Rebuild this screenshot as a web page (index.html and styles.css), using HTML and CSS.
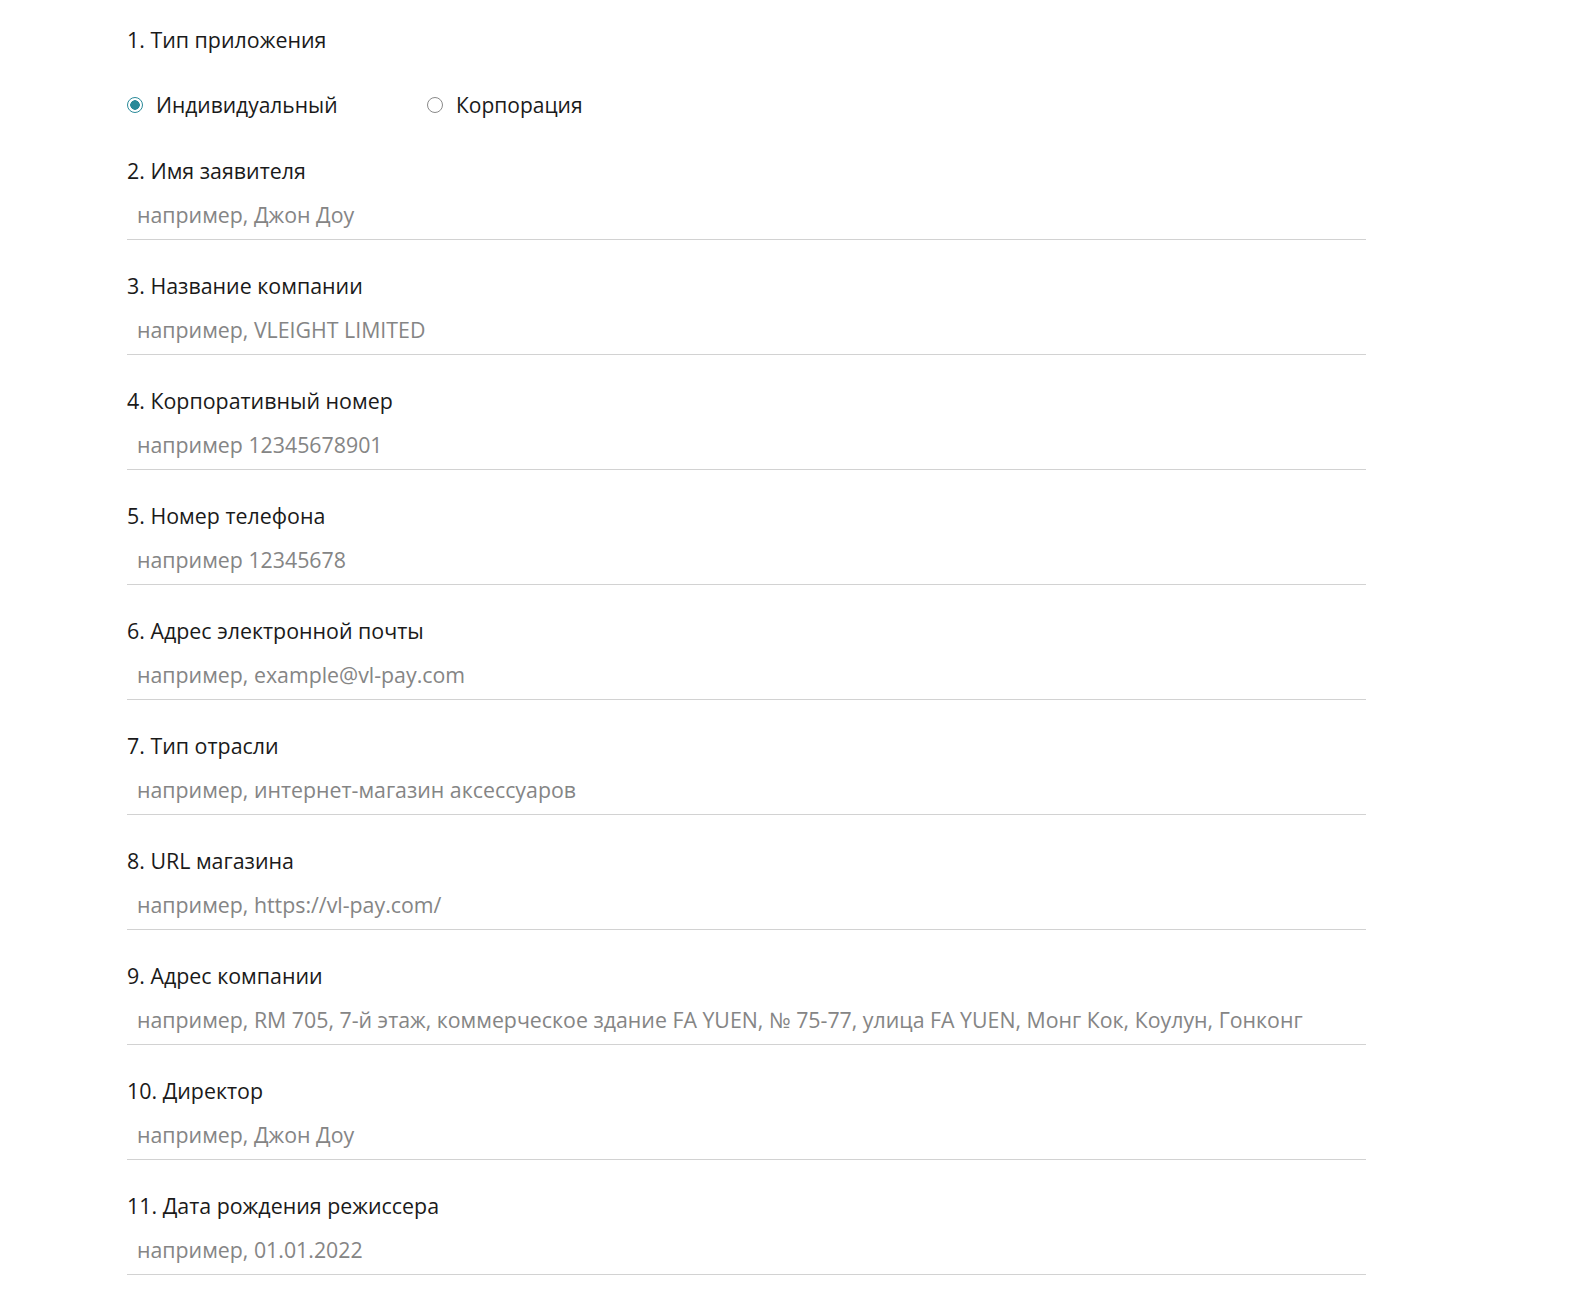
FILE: index.html
```html
<!DOCTYPE html>
<html lang="ru">
  <head>
    <meta charset="UTF-8" />
    <meta name="viewport" content="width=device-width, initial-scale=1.0" />
    <title>Заявка</title>
    <link rel="stylesheet" href="styles.css">
  </head>
  <body>
    <form class="apply-form">
      <div class="field">
        <label class="field-label">1. Тип приложения</label>
        <div class="radio-row">
          <label class="radio-option">
            <input type="radio" name="appType" value="individual" checked />
            <span>Индивидуальный</span>
          </label>
          <label class="radio-option">
            <input type="radio" name="appType" value="corporate" />
            <span>Корпорация</span>
          </label>
        </div>
      </div>
      <div class="field">
        <label class="field-label" for="applicant">2. Имя заявителя</label>
        <input class="field-input" type="text" id="applicant" placeholder="например, Джон Доу" />
      </div>
      <div class="field">
        <label class="field-label" for="company">3. Название компании</label>
        <input class="field-input" type="text" id="company" placeholder="например, VLEIGHT LIMITED" />
      </div>
      <div class="field">
        <label class="field-label" for="corpNumber">4. Корпоративный номер</label>
        <input class="field-input" type="text" id="corpNumber" placeholder="например 12345678901" />
      </div>
      <div class="field">
        <label class="field-label" for="phone">5. Номер телефона</label>
        <input class="field-input" type="text" id="phone" placeholder="например 12345678" />
      </div>
      <div class="field">
        <label class="field-label" for="email">6. Адрес электронной почты</label>
        <input class="field-input" type="text" id="email" placeholder="например, example@vl-pay.com" />
      </div>
      <div class="field">
        <label class="field-label" for="industry">7. Тип отрасли</label>
        <input class="field-input" type="text" id="industry" placeholder="например, интернет-магазин аксессуаров" />
      </div>
      <div class="field">
        <label class="field-label" for="shopUrl">8. URL магазина</label>
        <input class="field-input" type="text" id="shopUrl" placeholder="например, https://vl-pay.com/" />
      </div>
      <div class="field">
        <label class="field-label" for="address">9. Адрес компании</label>
        <input class="field-input" type="text" id="address" placeholder="например, RM 705, 7-й этаж, коммерческое здание FA YUEN, № 75-77, улица FA YUEN, Монг Кок, Коулун, Гонконг" />
      </div>
      <div class="field">
        <label class="field-label" for="director">10. Директор</label>
        <input class="field-input" type="text" id="director" placeholder="например, Джон Доу" />
      </div>
      <div class="field">
        <label class="field-label" for="birthDate">11. Дата рождения режиссера</label>
        <input class="field-input" type="text" id="birthDate" placeholder="например, 01.01.2022" />
      </div>
    </form>
  </body>
</html>
```

FILE: styles.css
```css
* {
  font-family: "Open Sans", sans-serif;
  box-sizing: border-box;
}
body {
  margin: 0;
  background-color: #fff;
  color: #1a1a1a;
}
.apply-form {
  width: 1366px;
  padding: 26px 0 0 127px;
}
.field {
  display: flex;
  flex-direction: column;
  margin-bottom: 32px;
}
.field-label {
  font-size: 21.4px;
  line-height: 27px;
  color: #1a1a1a;
}
.radio-row {
  display: flex;
  margin-top: 37px;
  margin-bottom: 5px;
}
.radio-option {
  display: flex;
  align-items: center;
  width: 300px;
  font-size: 21px;
  line-height: 30px;
  color: #1a1a1a;
}
.radio-option input {
  appearance: none;
  width: 16px;
  height: 16px;
  margin: 0 13px 0 0;
  border: 1px solid #8a8a8a;
  border-radius: 50%;
  background: #fff;
}
.radio-option input:checked {
  border: 1.5px solid #2a8a99;
  background: radial-gradient(circle, #2a8a99 0 4.5px, #fff 5px);
}
.field-input {
  margin-top: 16px;
  height: 40px;
  padding: 1px 10px 11px;
  border: none;
  border-bottom: 1px solid #d2d2d2;
  font-size: 21.33px;
  line-height: 27px;
  color: #1a1a1a;
  outline: none;
}
.field-input::placeholder {
  color: #858585;
}
```
